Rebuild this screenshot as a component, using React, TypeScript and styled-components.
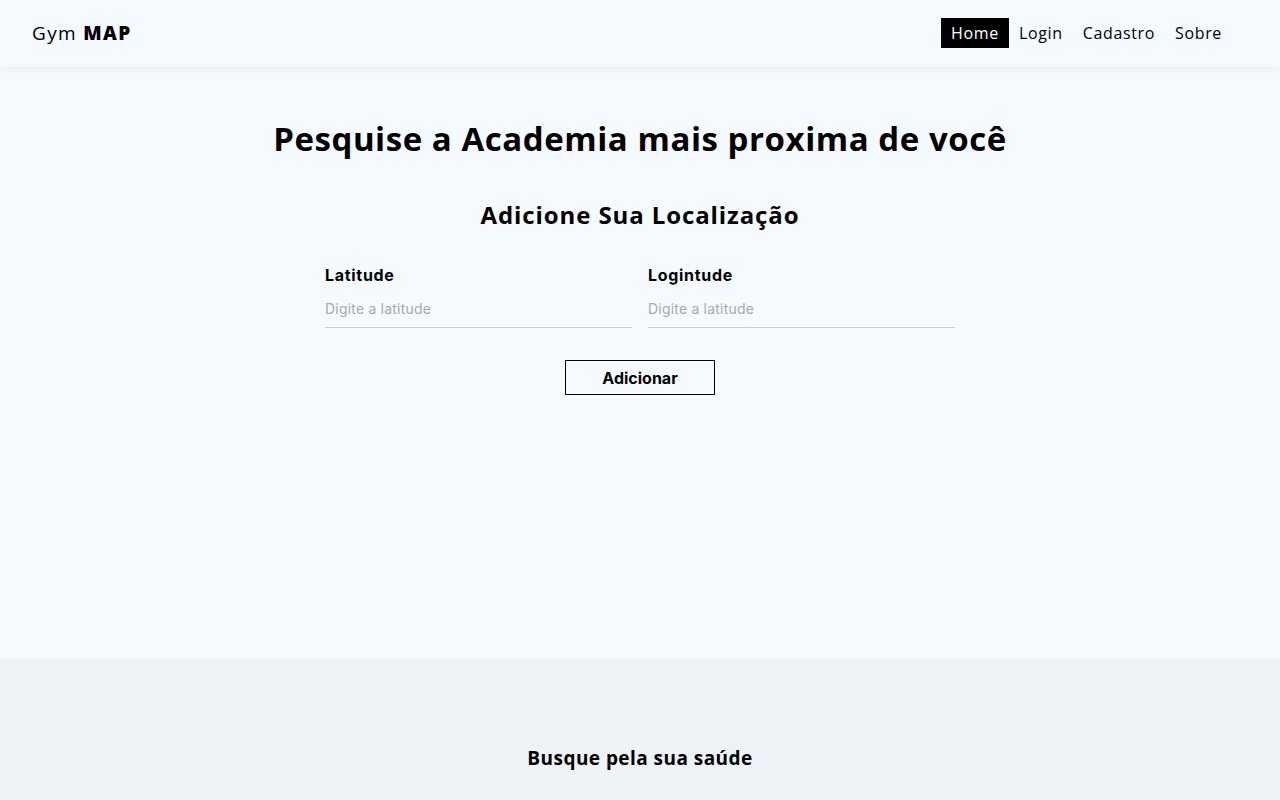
import React from "react";
import styled, { createGlobalStyle } from "styled-components";

const Global = createGlobalStyle`
  html, body { margin: 0; padding: 0; }
  body {
    background: #f5faff;
    font-family: "Open Sans", "DejaVu Sans", sans-serif;
    color: #000;
  }
  * { box-sizing: border-box; }
`;

const Page = styled.div`
  min-height: 800px;
  display: flex;
  flex-direction: column;
`;

const Header = styled.header`
  height: 67px;
  display: flex;
  align-items: center;
  justify-content: space-between;
  padding: 0 48px 0 32px;
  background: #f5faff;
  box-shadow: 0 2px 6px rgba(0, 0, 0, 0.06);
  position: relative;
  z-index: 1;
`;

const Logo = styled.div`
  font-family: "Open Sans", sans-serif;
  font-size: 19px;
  letter-spacing: 1.35px;
  margin-top: -2px;
  b { font-weight: 800; }
`;

const Nav = styled.nav`
  display: flex;
  align-items: center;
  margin-top: -2px;
`;

const NavLink = styled.a<{ $active?: boolean }>`
  font-family: "Open Sans", sans-serif;
  font-size: 16px;
  letter-spacing: 0.65px;
  line-height: 30px;
  height: 30px;
  padding: 0 10px;
  text-decoration: none;
  color: ${(p) => (p.$active ? "#fff" : "#000")};
  background: ${(p) => (p.$active ? "#000" : "transparent")};
`;

const Main = styled.main`
  height: 592px;
  display: flex;
  flex-direction: column;
  align-items: center;
  padding-top: 49px;
`;

const Title = styled.h1`
  margin: 0;
  font-family: "Open Sans", sans-serif;
  font-size: 33px;
  font-weight: 700;
  line-height: 46px;
  letter-spacing: 0.55px;
`;

const Subtitle = styled.h2`
  margin: 37px 0 0;
  font-family: "Open Sans", sans-serif;
  font-size: 24px;
  font-weight: 700;
  line-height: 32px;
  letter-spacing: 0.9px;
`;

const Form = styled.form`
  margin-top: 34px;
  display: flex;
  flex-direction: column;
  align-items: center;
`;

const Fields = styled.div`
  display: grid;
  grid-template-columns: 307px 307px;
  gap: 16px;
`;

const Field = styled.label`
  display: flex;
  flex-direction: column;
`;

const Label = styled.span`
  font-family: Inter, sans-serif;
  font-size: 16px;
  font-weight: 700;
  letter-spacing: 0.7px;
  line-height: 20px;
`;

const Input = styled.input`
  margin-top: 9px;
  height: 34px;
  border: none;
  border-bottom: 1px solid #c8ccd0;
  background: transparent;
  font-family: Inter, sans-serif;
  font-size: 14px;
  letter-spacing: 0.2px;
  padding: 0 0 4px;
  outline: none;
  &::placeholder { color: #a9a9a9; }
`;

const Button = styled.button`
  margin-top: 32px;
  width: 150px;
  height: 35px;
  border: 1px solid #000;
  background: transparent;
  font-family: Inter, sans-serif;
  font-size: 16px;
  font-weight: 700;
  color: #000;
`;

const Footer = styled.footer`
  flex: 1;
  background: #eef2f7;
  display: flex;
  justify-content: center;
  padding-top: 87px;
`;

const FooterText = styled.h3`
  margin: 0;
  font-family: "Open Sans", sans-serif;
  font-size: 19px;
  font-weight: 700;
  line-height: 24px;
  letter-spacing: 0.45px;
`;

export default function App() {
  return (
    <Page>
      <Global />
      <Header>
        <Logo>
          Gym <b>MAP</b>
        </Logo>
        <Nav>
          <NavLink $active href="#">Home</NavLink>
          <NavLink href="#">Login</NavLink>
          <NavLink href="#">Cadastro</NavLink>
          <NavLink href="#">Sobre</NavLink>
        </Nav>
      </Header>
      <Main>
        <Title>Pesquise a Academia mais proxima de você</Title>
        <Subtitle>Adicione Sua Localização</Subtitle>
        <Form onSubmit={(e) => e.preventDefault()}>
          <Fields>
            <Field>
              <Label>Latitude</Label>
              <Input placeholder="Digite a latitude" />
            </Field>
            <Field>
              <Label>Logintude</Label>
              <Input placeholder="Digite a latitude" />
            </Field>
          </Fields>
          <Button type="submit">Adicionar</Button>
        </Form>
      </Main>
      <Footer>
        <FooterText>Busque pela sua saúde</FooterText>
      </Footer>
    </Page>
  );
}
